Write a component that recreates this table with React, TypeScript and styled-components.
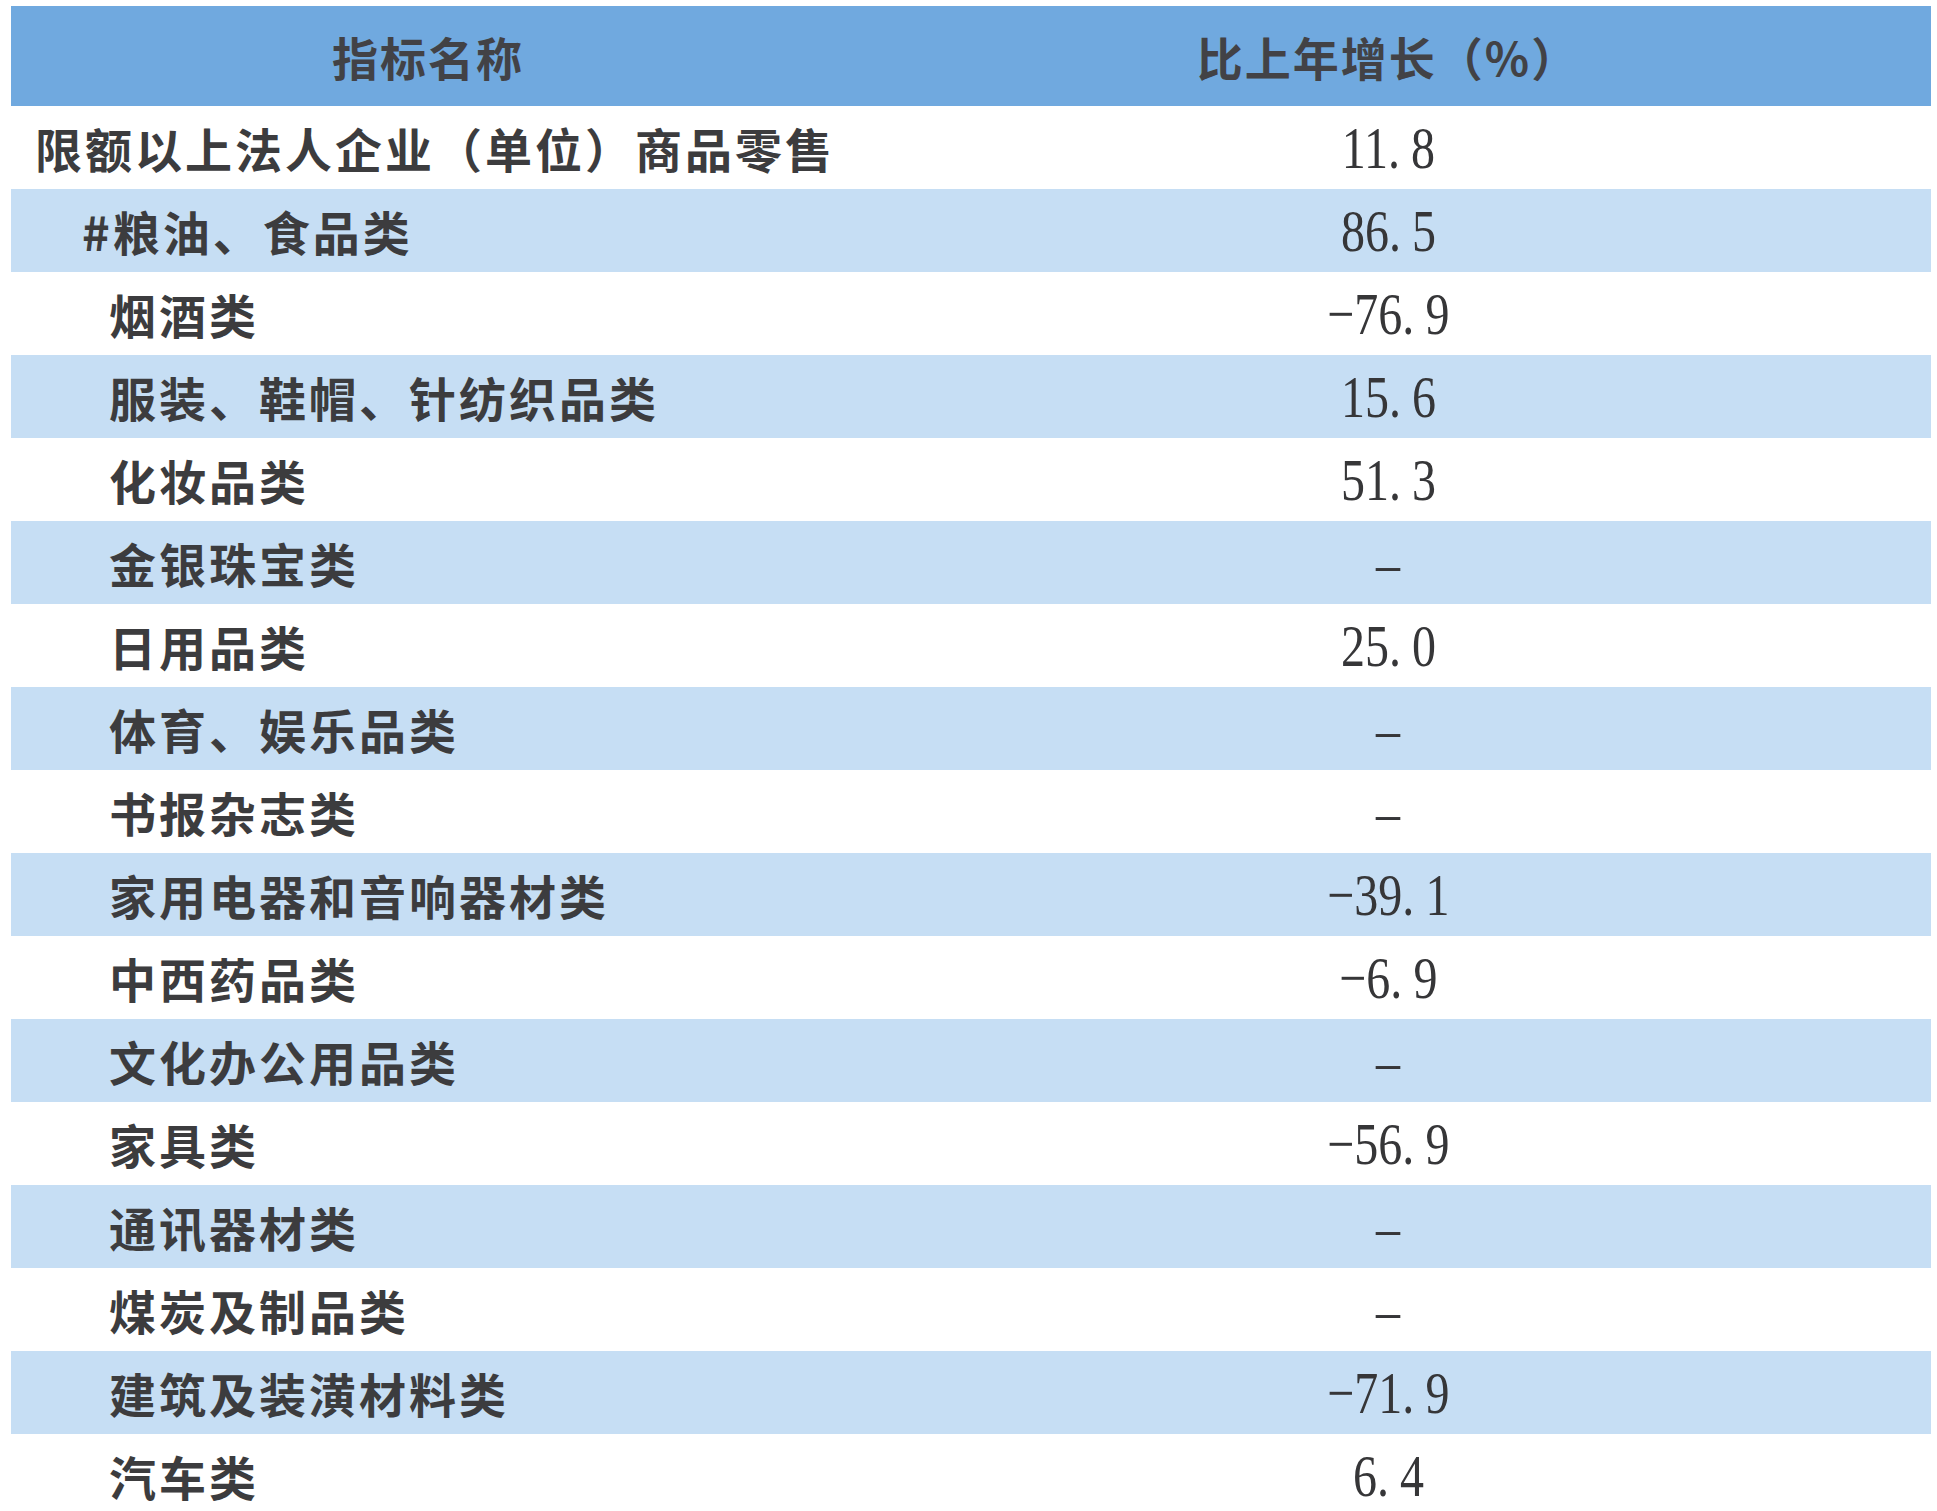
import { FC } from "react"
import styled, { createGlobalStyle } from "styled-components"

const GlobalStyle = createGlobalStyle`
  html, body {
    margin: 0;
    padding: 0;
    background: #ffffff;
  }
  body {
    font-family: "Noto Sans CJK SC", "Noto Sans", sans-serif;
    color: #2f2f2f;
  }
`

interface Item {
  name: string
  value: string
  level: 0 | 1 | 2
}

const items: Item[] = [
  { name: "限额以上法人企业（单位）商品零售", value: "11.8", level: 0 },
  { name: "#粮油、食品类", value: "86.5", level: 1 },
  { name: "烟酒类", value: "-76.9", level: 2 },
  { name: "服装、鞋帽、针纺织品类", value: "15.6", level: 2 },
  { name: "化妆品类", value: "51.3", level: 2 },
  { name: "金银珠宝类", value: "–", level: 2 },
  { name: "日用品类", value: "25.0", level: 2 },
  { name: "体育、娱乐品类", value: "–", level: 2 },
  { name: "书报杂志类", value: "–", level: 2 },
  { name: "家用电器和音响器材类", value: "-39.1", level: 2 },
  { name: "中西药品类", value: "-6.9", level: 2 },
  { name: "文化办公用品类", value: "–", level: 2 },
  { name: "家具类", value: "-56.9", level: 2 },
  { name: "通讯器材类", value: "–", level: 2 },
  { name: "煤炭及制品类", value: "–", level: 2 },
  { name: "建筑及装潢材料类", value: "-71.9", level: 2 },
  { name: "汽车类", value: "6.4", level: 2 },
]

const indent = [24, 71, 98]

const Table = styled.div`
  width: 1920px;
  margin: 6px 0 0 11px;
`

const HeaderRow = styled.div`
  display: grid;
  grid-template-columns: 834px 1fr;
  height: 100px;
  align-items: center;
  background: #70a9df;
`

const HeaderCell = styled.div`
  text-align: center;
  font-size: 46px;
  font-weight: 700;
  letter-spacing: 2px;
  color: #424246;
`

const Row = styled.div<{ $striped: boolean }>`
  display: grid;
  grid-template-columns: 834px 1fr;
  height: 83px;
  align-items: center;
  background: ${(p) => (p.$striped ? "#c6def4" : "transparent")};
`

const NameCell = styled.div<{ $indent: number }>`
  padding-left: ${(p) => p.$indent}px;
  font-size: 47px;
  font-weight: 700;
  letter-spacing: 3px;
  white-space: nowrap;
  color: #3c3c3e;
`

const ValueCell = styled.div`
  text-align: center;
`

const Number = styled.span`
  display: inline-block;
  font-family: "Liberation Serif", "Times New Roman", serif;
  font-size: 60px;
  line-height: 1;
  color: #363638;
  transform: scaleX(0.8);
`

const Dot = styled.span`
  margin-right: 14px;
`

const Value: FC<{ text: string }> = ({ text }) => {
  const shown = text.replace("-", "−")
  const parts = shown.split(".")
  return (
    <Number>
      {parts.length === 2 ? (
        <>
          {parts[0]}
          <Dot>.</Dot>
          {parts[1]}
        </>
      ) : (
        shown
      )}
    </Number>
  )
}

const App: FC = () => {
  return (
    <>
      <GlobalStyle />
      <Table>
        <HeaderRow>
          <HeaderCell>指标名称</HeaderCell>
          <HeaderCell>比上年增长（%）</HeaderCell>
        </HeaderRow>
        {items.map((item, i) => (
          <Row key={item.name} $striped={i % 2 === 1}>
            <NameCell $indent={indent[item.level]}>{item.name}</NameCell>
            <ValueCell>
              <Value text={item.value} />
            </ValueCell>
          </Row>
        ))}
      </Table>
    </>
  )
}

export default App
